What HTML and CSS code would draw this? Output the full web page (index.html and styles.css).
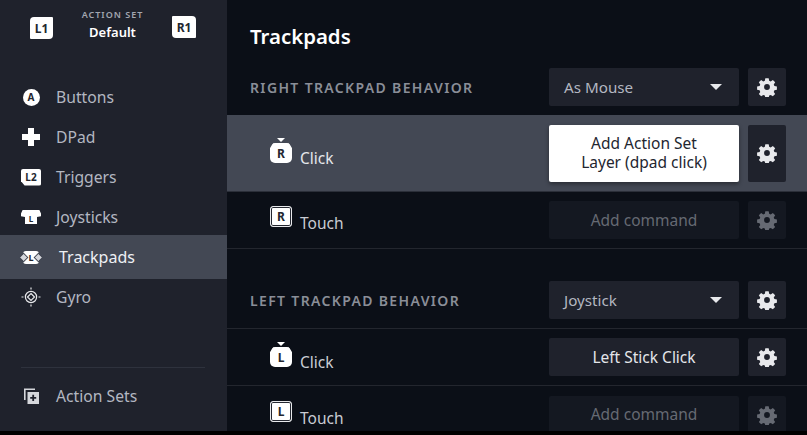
FILE: index.html
```html
<!DOCTYPE html>
<html lang="en">
<head>
<meta charset="utf-8">
<title>Trackpads</title>
<link rel="stylesheet" href="styles.css">
</head>
<body>
<svg class="defs" width="0" height="0" aria-hidden="true">
  <symbol id="gear" viewBox="0 0 24 24">
    <path fill-rule="evenodd" d="M10 1.500h4l.6 3 1.900.8 2.500-1.700 2.800 2.800-1.700 2.500.8 1.900 3 .6v4l-3 .6-.8 1.900 1.700 2.500-2.800 2.800-2.500-1.700-1.900.8-.6 3h-4l-.6-3-1.900-.8-2.500 1.700-2.800-2.800 1.700-2.500-.8-1.900-3-.6v-4l3-.6.8-1.900L2.200 6.400 5 3.600l2.500 1.700 1.900-.8zM12 8.500a3.500 3.500 0 1 0 0 7 3.500 3.500 0 0 0 0-7z"/>
  </symbol>
</svg>
<div class="app">
  <aside class="sidebar">
    <header class="set-head">
      <span class="bumper">L1</span>
      <div class="set-title">
        <div class="set-label">ACTION SET</div>
        <div class="set-name">Default</div>
      </div>
      <span class="bumper bumper-r">R1</span>
    </header>
    <nav class="nav">
      <div class="nav-item">
        <span class="nav-icon"><span class="icon-a">A</span></span>Buttons
      </div>
      <div class="nav-item">
        <span class="nav-icon"><svg width="20" height="20" viewBox="0 0 20 20"><path class="fill-white" d="M7 1h6v6h6v6h-6v6H7v-6H1V7h6z"/></svg></span>DPad
      </div>
      <div class="nav-item">
        <span class="nav-icon"><span class="icon-l2">L2</span></span>Triggers
      </div>
      <div class="nav-item">
        <span class="nav-icon"><span class="icon-stick">L</span></span>Joysticks
      </div>
      <div class="nav-item nav-item-active">
        <span class="nav-icon"><span class="icon-pad">L</span></span>Trackpads
      </div>
      <div class="nav-item">
        <span class="nav-icon"><svg width="20" height="20" viewBox="0 0 20 20"><g fill="none" stroke="#e8e9ec" stroke-width="1.200"><circle cx="10" cy="10" r="5.600"/><path d="M10 6.500 13.500 10 10 13.500 6.500 10z"/><path d="M10 .5v2M10 17.500v2M.5 10h2M17.500 10h2"/></g></svg></span>Gyro
      </div>
    </nav>
    <div class="side-foot">
      <div class="nav-item">
        <span class="nav-icon"><svg width="20" height="20" viewBox="0 0 20 20"><path d="M3 2.500h11v1.600H4.600V14H3z" fill="#d5d7dc"/><path fill-rule="evenodd" d="M6.500 6H18v12H6.500zM11.300 8.800v2.200H9.200v1.800h2.100V15h1.800v-2.200h2.100V11h-2.100V8.800z" fill="#d5d7dc"/></svg></span>Action Sets
      </div>
    </div>
  </aside>
  <main class="main">
    <h1 class="title">Trackpads</h1>

    <section class="head-row">
      <h2 class="section-name">RIGHT TRACKPAD BEHAVIOR</h2>
      <div class="select">As Mouse<span class="caret"></span></div>
      <button class="gear-btn"><svg class="gear"><use href="#gear"/></svg></button>
    </section>

    <div class="row row-active">
      <div class="row-label row-label-click"><span class="glyph glyph-click">R</span>Click</div>
      <button class="cmd cmd-focus">Add Action Set Layer (dpad click)</button>
      <button class="gear-btn gear-btn-tall"><svg class="gear"><use href="#gear"/></svg></button>
    </div>
    <div class="row row-line">
      <div class="row-label"><span class="glyph glyph-touch">R</span>Touch</div>
      <button class="cmd cmd-empty">Add command</button>
      <button class="gear-btn gear-btn-dim"><svg class="gear"><use href="#gear"/></svg></button>
    </div>

    <section class="head-row head-row-2">
      <h2 class="section-name">LEFT TRACKPAD BEHAVIOR</h2>
      <div class="select">Joystick<span class="caret"></span></div>
      <button class="gear-btn"><svg class="gear"><use href="#gear"/></svg></button>
    </section>

    <div class="row row-line row-top">
      <div class="row-label row-label-click"><span class="glyph glyph-click">L</span>Click</div>
      <button class="cmd">Left Stick Click</button>
      <button class="gear-btn"><svg class="gear"><use href="#gear"/></svg></button>
    </div>
    <div class="row row-last">
      <div class="row-label"><span class="glyph glyph-touch">L</span>Touch</div>
      <button class="cmd cmd-empty">Add command</button>
      <button class="gear-btn gear-btn-dim"><svg class="gear"><use href="#gear"/></svg></button>
    </div>
  </main>
</div>
</body>
</html>
```

FILE: styles.css
```css
* { box-sizing: border-box; }
html, body { margin: 0; height: 100%; background: #000; overflow: hidden; }
body { font-family: "Noto Sans", "Open Sans", sans-serif; }
.defs { position: absolute; }
button { font: inherit; border: 0; padding: 0; }

.app { display: flex; width: 807px; height: 431px; overflow: hidden; }

.sidebar {
  width: 227px; flex: none; background: #1f222c;
  display: flex; flex-direction: column; color: #b3b7c1;
}
.set-head { display: flex; align-items: flex-start; padding: 9px 31px 0 30px; height: 77px; flex: none; }
.set-title { flex: 1; text-align: center; }
.set-label { font-size: 9px; line-height: 12px; font-weight: 600; letter-spacing: 1px; color: #a3a7b1; }
.set-name { font-size: 13px; line-height: 18px; font-weight: 600; color: #fff; margin-top: 2px; }
.bumper {
  width: 23px; height: 22px; margin-top: 8px; background: #fff; color: #23262f;
  border-radius: 4px 1px 4px 1px; font-size: 12px; font-weight: 700;
  display: flex; align-items: center; justify-content: center;
}
.bumper-r { border-radius: 1px 4px 1px 4px; width: 24px; margin-top: 7px; }

.nav { display: flex; flex-direction: column; }
.nav-item {
  height: 40px; display: flex; align-items: center; padding-left: 21px;
  font-size: 15.7px; color: #b3b7c1;
}
.nav-icon { width: 20px; height: 20px; margin-right: 15px; display: flex; align-items: center; justify-content: center; flex: none; position: relative; }
.nav-item-active {
  height: 44px; margin: -2px 0; background: #434854; color: #eef0f4; font-size: 16px;
}
.nav-item-active .nav-icon { margin-right: 18px; }
.fill-white { fill: #fff; }
.icon-a {
  width: 17px; height: 17px; border-radius: 50%; background: #fff; color: #23262f;
  font-size: 10px; font-weight: 700; display: flex; align-items: center; justify-content: center;
}
.icon-l2 {
  width: 20px; height: 17px; background: #fff; color: #23262f; border-radius: 2px;
  font-size: 10px; font-weight: 700; display: flex; align-items: center; justify-content: center;
  clip-path: polygon(0 0, 100% 0, 100% 100%, 18% 100%, 0 75%);
}
.icon-stick {
  width: 20px; height: 14px; background: #fff; color: #23262f; padding-top: 3px;
  font-size: 8px; font-weight: 700; display: flex; align-items: center; justify-content: center;
  clip-path: polygon(8% 0, 92% 0, 100% 25%, 100% 45%, 80% 50%, 80% 100%, 20% 100%, 20% 50%, 0 45%, 0 25%);
}
.icon-pad {
  width: 16px; height: 13px; background: #fff; color: #23262f; border-radius: 3px;
  font-size: 9px; font-weight: 700; display: flex; align-items: center; justify-content: center;
}
.icon-pad::before, .icon-pad::after {
  content: ""; position: absolute; top: 7.500px; width: 5px; height: 5px;
  background: #d5d7dc; outline: 1px solid #434854; transform: rotate(45deg);
}
.icon-pad::before { left: 0; }
.icon-pad::after { right: 0; }
.side-foot { margin-top: auto; padding-bottom: 15px; }
.side-foot::before {
  content: ""; display: block; height: 1px; background: #2e323d; margin: 0 22px 0 21px;
}
.side-foot .nav-item { margin-top: 8px; }

.main {
  flex: 1; background: #0b0f17; color: #c9ccd3; display: flex; flex-direction: column; overflow: hidden;
}
.title { margin: 0; padding: 22px 0 0 23px; height: 68px; flex: none; font-size: 20.4px; line-height: 28px; font-weight: 600; color: #fff; }

.head-row { display: flex; align-items: center; height: 38px; padding-left: 23px; flex: none; }
.head-row-2 { margin-top: 32px; }
.section-name { margin: 0; flex: 1; font-size: 14px; font-weight: 600; letter-spacing: 1.35px; color: #8a8e98; }
.select {
  width: 190px; height: 38px; background: #1f222c; border-radius: 2px; color: #b3b7c1;
  font-size: 15.2px; display: flex; align-items: center; justify-content: space-between; padding: 0 17px 0 15px;
}
.caret { width: 0; height: 0; border: 6px solid transparent; border-top: 6px solid #e8e9ec; border-bottom: 0; }
.gear-btn {
  width: 38px; height: 38px; margin: 0 21px 0 9px; background: #1f222c; border-radius: 2px;
  display: flex; align-items: center; justify-content: center; flex: none;
}
.gear { width: 20px; height: 20px; fill: #e8e9ec; }
.gear-btn-tall { height: 57px; }
.gear-btn-dim { background: #141821; }
.gear-btn-dim .gear { fill: #666a73; }

.row { display: flex; align-items: center; padding-left: 23px; flex: none; }
.row-active { height: 77px; margin-top: 9px; background: #434854; border-bottom: 1px solid #2b2f39; }
.row-line { height: 57px; border-bottom: 1px solid #23262e; }
.row-top { margin-top: 9px; height: 58px; border-top: 1px solid #23262e; }
.row-last { height: 57px; }
.row-label { flex: 1; display: flex; align-items: flex-end; font-size: 15.5px; color: #c9ccd3; padding-left: 20px; }
.row-label-click { padding-top: 6px; }
.row-active .row-label { color: #e4e6ea; }
.glyph {
  width: 22px; height: 21px; margin-right: 8px; font-size: 12px; font-weight: 700;
  display: flex; align-items: center; justify-content: center; position: relative;
  background: #fff; color: #23262f;
}
.glyph-click {
  height: 20px; padding-top: 1px; border-radius: 5px; margin-bottom: 6px;
  clip-path: polygon(14% 0, 86% 0, 100% 25%, 100% 100%, 0 100%, 0 25%);
}
.row-label-click::before {
  content: ""; width: 0; height: 0; margin-right: -8px; align-self: flex-start;
  border: 4px solid transparent; border-top: 4px solid #fff; border-bottom: 0;
  transform: translate(7px, -5px);
}
.glyph-touch {
  margin-bottom: 7px; border-radius: 3px; border: 1px solid #e8e9ec;
  box-shadow: inset 0 0 0 1px #23262f;
}
.cmd {
  width: 190px; height: 38px; background: #1f222c; color: #e4e6ea; border-radius: 2px;
  font-size: 15.5px; line-height: 19px; text-align: center; padding: 0 25px;
}
.cmd-focus { height: 57px; background: #fff; color: #23262f; box-shadow: 0 2px 4px rgba(0,0,0,.4); }
.cmd-empty { background: #141821; color: #666a73; }
```
